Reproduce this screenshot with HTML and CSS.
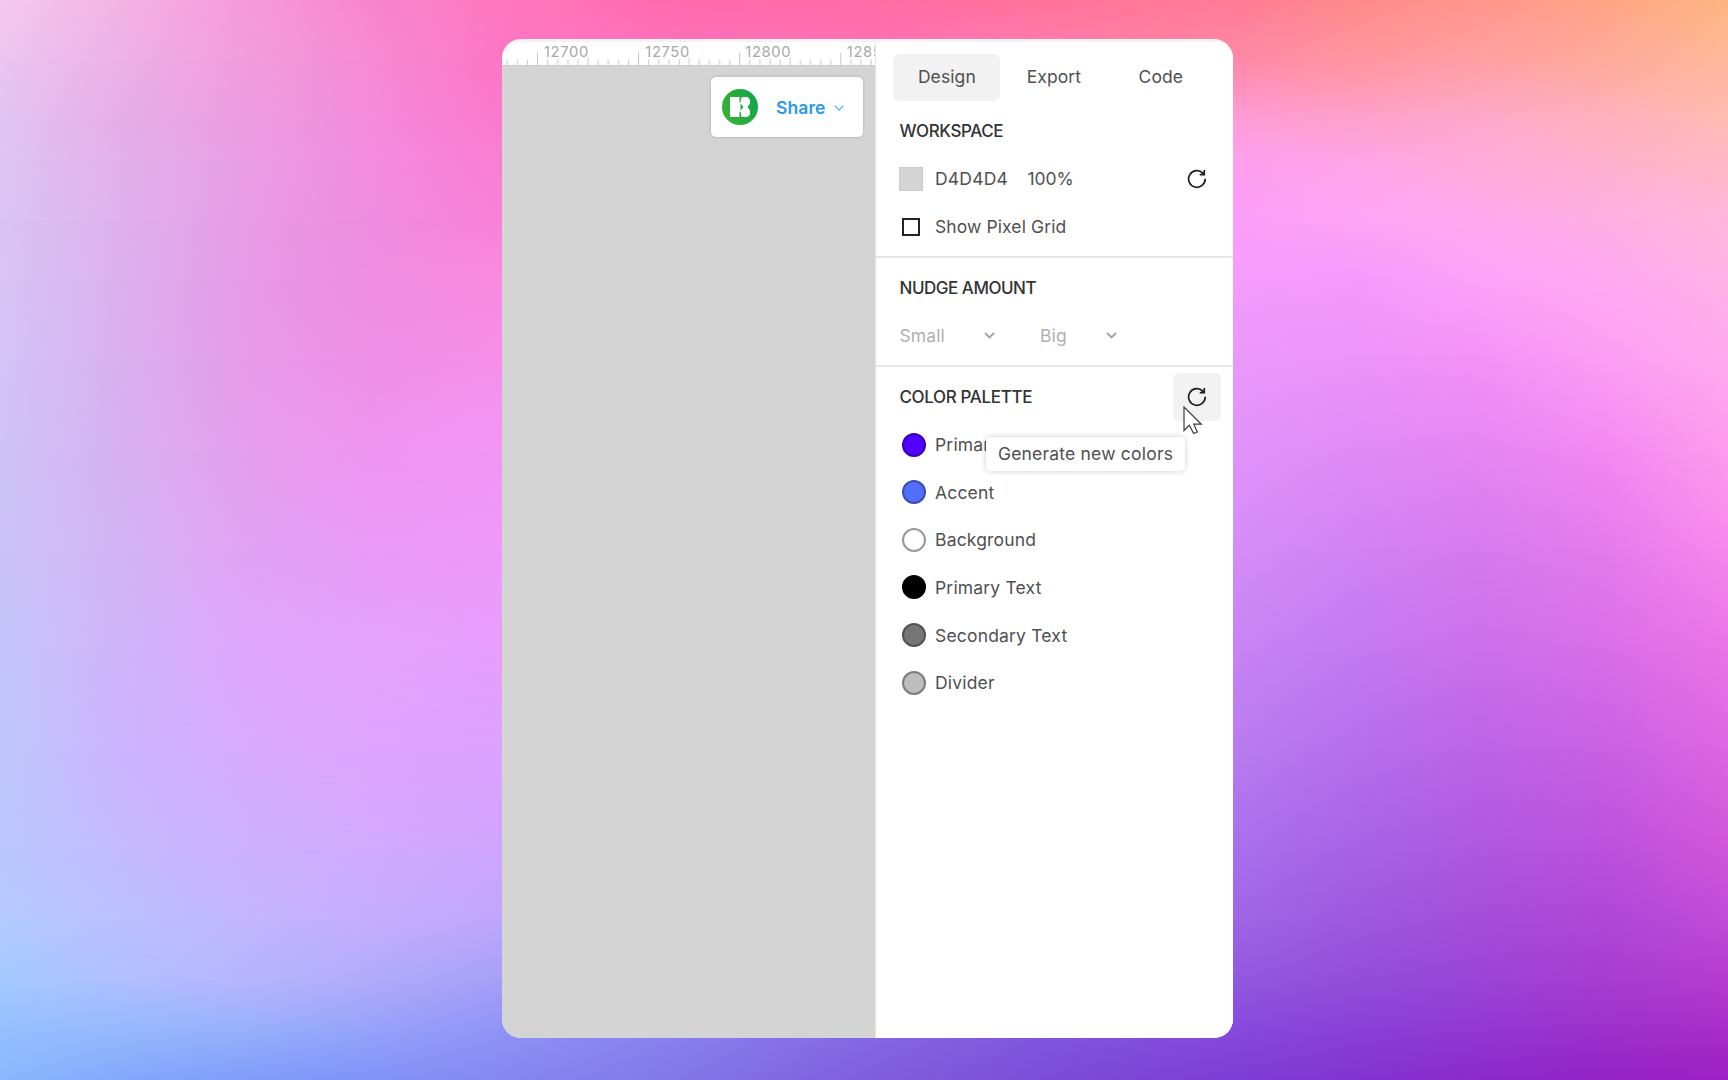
FILE: index.html
```html
<!DOCTYPE html>
<html lang="en">
<head>
<meta charset="utf-8">
<title>Workspace settings</title>
<link rel="stylesheet" href="styles.css">
</head>
<body>
<div class="stage">
  <div class="backdrop" aria-hidden="true">
    <i class="band b0"></i><i class="band b1"></i><i class="band b2"></i><i class="band b3"></i>
    <i class="band b4"></i><i class="band b5"></i><i class="band b6"></i><i class="band b7"></i>
    <i class="band b8"></i><i class="band b9"></i><i class="band b10"></i><i class="band b11"></i>
    <i class="band b12"></i><i class="band b13"></i><i class="band b14"></i><i class="band b15"></i>
  </div>
  <main class="window">
    <section class="canvas">
      <div class="ruler">
        <svg width="373" height="23" viewBox="0 0 373 23">
          <defs>
            <pattern id="ticks" x="35" y="0" width="101.1" height="23" patternUnits="userSpaceOnUse">
              <path d="M.5 10.500V23M51 15.500V23M10.600 17.500V23M20.700 17.500V23M30.900 17.500V23M41 17.500V23M61.200 17.500V23M71.300 17.500V23M81.500 17.500V23M91.600 17.500V23" stroke="#c6c6c6"/>
            </pattern>
          </defs>
          <rect width="373" height="23" fill="url(#ticks)"/>
          <g class="ruler-label">
            <text x="42" y="14.900">12700</text>
            <text x="143.300" y="14.900">12750</text>
            <text x="243.300" y="14.900">12800</text>
            <text x="344.800" y="14.900">12850</text>
          </g>
        </svg>
      </div>
      <div class="share">
        <svg class="avatar" width="36" height="36" viewBox="0 0 36 36">
          <defs><linearGradient id="green" x1="0" x2="1" y1=".7" y2=".3"><stop stop-color="#3bb034"/><stop offset="1" stop-color="#0fa848"/></linearGradient></defs>
          <circle cx="18" cy="18" r="18" fill="url(#green)"/>
          <path d="M8 8h9.500v6l1.500-2V8.500h1.500L21 8h4.500l2.500 2.500v4L25.500 18l2.500 3.500v4L25.500 28H21l-.5-.5H19V24l-1.500-2v6H8z" fill="#fff"/>
          <path d="M18.500 14.500v7l3-3.500z" fill="#22ab40"/>
        </svg>
        <span class="share-label">Share</span>
        <svg class="share-chevron" width="10" height="6" viewBox="0 0 10 6"><path d="M.7.7 5 5 9.300.7"/></svg>
      </div>
    </section>
    <aside class="panel">
      <nav class="tabs">
        <span class="tab active">Design</span><span class="tab">Export</span><span class="tab">Code</span>
      </nav>
      <section class="section workspace">
        <h2>WORKSPACE</h2>
        <div class="row">
          <span class="swatch"></span><span class="hex">D4D4D4</span><span class="pct">100%</span>
          <span class="icon-button"><svg width="20" height="20" viewBox="0 0 20 20"><path d="M18.200 9.700A8.300 8.300 0 1 1 15.800 4.100L17.100 5.400M17.300 1V5.600H12.700"/></svg></span>
        </div>
        <div class="row"><span class="checkbox"></span><span class="option">Show Pixel Grid</span></div>
      </section>
      <section class="section nudge">
        <h2>NUDGE AMOUNT</h2>
        <div class="row muted">
          <span class="field small">Small<svg width="11" height="7" viewBox="0 0 11 7"><path d="M1 1 5.500 5.500 10 1"/></svg></span>
          <span class="field big">Big<svg width="11" height="7" viewBox="0 0 11 7"><path d="M1 1 5.500 5.500 10 1"/></svg></span>
        </div>
      </section>
      <section class="section palette">
        <div class="heading-row">
          <h2>COLOR PALETTE</h2>
          <span class="icon-button hover"><svg width="20" height="20" viewBox="0 0 20 20"><path d="M18.200 9.700A8.300 8.300 0 1 1 15.800 4.100L17.100 5.400M17.300 1V5.600H12.700"/></svg>
            <svg class="cursor" width="20" height="29" viewBox="0 0 20 29"><path d="M1 1V24.500L6.300 19.300 10.700 27.500 14.300 26 10.800 18.200H18.300z"/></svg>
            <span class="tooltip">Generate new colors</span>
          </span>
        </div>
        <ul class="colors">
          <li><i class="dot primary"></i>Primary</li>
          <li><i class="dot accent"></i>Accent</li>
          <li><i class="dot background"></i>Background</li>
          <li><i class="dot text-1"></i>Primary Text</li>
          <li><i class="dot text-2"></i>Secondary Text</li>
          <li><i class="dot divider"></i>Divider</li>
        </ul>
      </section>
    </aside>
  </main>
</div>
</body>
</html>
```
FILE: styles.css
```css
* { box-sizing: border-box; }
body { margin: 0; font-family: Inter, "Liberation Sans", sans-serif; font-size: 17.5px; letter-spacing: .1px; color: #505050; }
.stage { display: grid; width: 1728px; height: 1080px; overflow: hidden; }
.backdrop, .window { grid-area: 1 / 1; }

/* Mesh gradient: each band fades in over the one before it */
.backdrop { display: grid; }
.band {
  grid-area: 1 / 1;
  background: linear-gradient(90deg, var(--c));
  -webkit-mask-image: linear-gradient(transparent var(--from), #000 var(--to));
  mask-image: linear-gradient(transparent var(--from), #000 var(--to));
}
.b0 { -webkit-mask-image: none; mask-image: none; --c: #f4c9f2 0, #f4b2e4 125px, #f89ada 250px, #f885cc 375px, #ff78c0 500px, #ff69ae 680px, #ff6ba4 860px, #ff739c 1050px, #ff7c94 1233px, #ff8a8c 1357px, #ff968c 1480px, #ffa486 1604px, #ffb682 1728px; }
.b1 { --from: 0px; --to: 60px; --c: #eac6f0 0, #edb0e6 125px, #f29cdc 250px, #f68ad2 375px, #fd76c4 500px, #ff74b8 860px, #ff88a8 1233px, #ff969f 1357px, #ffa0a4 1480px, #ffaa9a 1604px, #ffb89a 1728px; }
.b2 { --from: 60px; --to: 120px; --c: #e2c4f1 0, #e6ade6 125px, #ec9ce0 250px, #f48adb 375px, #fb79cc 500px, #ff9cd8 1233px, #ffa0cc 1357px, #ffa8cc 1480px, #ffb0be 1604px, #ffbcb4 1728px; }
.b3 { --from: 120px; --to: 160px; --c: #dfc4f2 0, #e2b0ea 125px, #ea9de4 250px, #f38be0 375px, #fa7ed2 500px, #ffa0ee 1233px, #ffa4e6 1357px, #ffaad8 1480px, #ffb2cc 1604px, #ffb8c4 1728px; }
.b4 { --from: 160px; --to: 220px; --c: #dac4f3 0, #dfb0ec 125px, #e89be6 250px, #ef8be0 375px, #f882d8 500px, #fc9efa 1233px, #fea4f6 1357px, #ffa9ee 1480px, #ffafe4 1604px, #ffb6da 1728px; }
.b5 { --from: 220px; --to: 280px; --c: #d8c4f4 0, #dcb0ee 125px, #e799e8 250px, #f08de2 375px, #f88ae0 500px, #f49cfc 1233px, #f59afb 1357px, #fda2fa 1480px, #ffa9f2 1604px, #ffb2e6 1728px; }
.b6 { --from: 280px; --to: 360px; --c: #d3c4f8 0, #daaff0 125px, #e69aea 250px, #f18fe8 375px, #f78fea 500px, #ea98fb 1233px, #ec94f9 1357px, #f591f6 1480px, #fd9df5 1604px, #ffaaee 1728px; }
.b7 { --from: 360px; --to: 450px; --c: #cec3f8 0, #d7b0f2 125px, #e69eee 250px, #ee94f0 375px, #f396f6 500px, #e093fa 1233px, #df8bf7 1357px, #e685f3 1480px, #f488f1 1604px, #ff9bee 1728px; }
.b8 { --from: 450px; --to: 550px; --c: #cac3f9 0, #d4b3f6 125px, #e2a2f4 250px, #ea9bf7 375px, #ee99f9 500px, #d68cf8 1233px, #d182f5 1357px, #d67af0 1480px, #e57aec 1604px, #f688ec 1728px; }
.b9 { --from: 550px; --to: 650px; --c: #c4c4fc 0, #d0b4fa 125px, #dea6fb 250px, #e5a2fb 375px, #e89efd 500px, #c784f4 1233px, #c479f1 1357px, #cb70ea 1480px, #da6dea 1604px, #e874e6 1728px; }
.b10 { --from: 650px; --to: 750px; --c: #bec6fc 0, #cdb4fe 125px, #d8aafc 250px, #dea4fd 375px, #dda2ff 500px, #b87cef 1233px, #b76eec 1357px, #bb64e6 1480px, #ca60e2 1604px, #dc66e4 1728px; }
.b11 { --from: 750px; --to: 850px; --c: #b9c6fd 0, #c5bbfe 125px, #ccb0fd 250px, #d2aafd 375px, #d0a5fd 500px, #a870ec 1233px, #a762e5 1357px, #ae58e0 1480px, #bc50dc 1604px, #cf56d8 1728px; }
.b12 { --from: 850px; --to: 920px; --c: #b2caff 0, #bcc0ff 125px, #c2b5fd 250px, #c5aefd 375px, #bfa6fc 500px, #9e66e6 1233px, #9e58e0 1357px, #a44dda 1480px, #b046d8 1604px, #c04cd8 1728px; }
.b13 { --from: 920px; --to: 980px; --c: #a4caff 0, #b0bfff 125px, #b6b5fc 250px, #b1aafb 375px, #a69ff8 500px, #9159e0 1233px, #934dda 1357px, #9a44d8 1480px, #a83cd2 1604px, #b43ccf 1728px; }
.b14 { --from: 980px; --to: 1030px; --c: #94c0ff 0, #96b8fd 125px, #98affc 250px, #95a2fa 375px, #9094f6 500px, #8a80ee 680px, #866ae6 860px, #8256de 1050px, #864adc 1233px, #8a40d6 1357px, #9238d2 1480px, #9e30cc 1604px, #a72eca 1728px; }
.b15 { --from: 1030px; --to: 1080px; --c: #88b8fe 0, #82a8fb 125px, #7f9cf8 250px, #8192f6 375px, #8488f0 500px, #8276e8 680px, #7f5fdf 860px, #7c4cd6 1050px, #7c3ed4 1233px, #8433d0 1357px, #8a2aca 1480px, #9422c4 1604px, #9c20c2 1728px; }

.window {
  z-index: 1; display: flex; width: 731px; height: 999px; margin: 39px 0 0 502px;
  border-radius: 19px; overflow: hidden; background: #fff; border-top: 3px solid #f3f3f3;
}
.canvas { width: 373px; background: #d4d4d4; display: flex; flex-direction: column; align-items: flex-end; }
.ruler { width: 373px; height: 23px; background: #fff; box-shadow: 0 1px 0 #cbcbcb; }
.ruler svg { display: block; }
.ruler-label { font-size: 14.700px; fill: #a8a8a8; letter-spacing: .65px; }
.share {
  display: flex; align-items: center; width: 152px; height: 60px; margin: 12px 12px 0 0; padding: 0 0 1px 11px;
  background: #fff; border-radius: 5px; box-shadow: 0 0 3px rgba(0, 0, 0, .2);
}
.share-label { margin: 1px 0 0 18px; font-weight: 600; color: #2a9aea; }
.share-chevron { margin: 3px 0 0 8px; fill: none; stroke: #6fbdf0; stroke-width: 1.500; }

.panel { flex: 1; border-left: 1px solid #e4e4e4; background: #fff; }
.tabs { display: flex; padding: 12px 0 0 17.400px; }
.tab { width: 107px; height: 47px; line-height: 46px; text-align: center; border-radius: 6px; }
.active { background: #f2f2f2; }
h2 { margin: 0; font-size: 17px; font-weight: 500; line-height: 24px; color: #333; letter-spacing: -.4px; }
.section { padding-left: 23.500px; }
.workspace { height: 157px; padding-top: 18px; border-bottom: 2px solid #e6e6e6; }
.row { display: flex; align-items: center; height: 48px; }
.workspace h2 + .row { margin-top: 12px; }
.workspace .row { margin-left: -.5px; }
.swatch { width: 24px; height: 24px; margin-right: 12px; background: #d4d4d4; border: 1px solid #cbcbcb; }
.hex, .pct, .option { padding-bottom: 2px; }
.hex { width: 92.500px; letter-spacing: .2px; }
.pct { letter-spacing: -.1px; }
.icon-button { position: relative; display: grid; place-items: center; width: 48px; height: 48px; margin: 0 12px 0 auto; border-radius: 6px; }
.icon-button > svg:first-child { fill: none; stroke: #1f1f1f; stroke-width: 1.700; }
.hover { background: #f2f2f2; }
.checkbox { width: 18px; height: 18px; margin: -1px 15px 0 3px; border: 2px solid #222; }
.nudge { height: 109px; padding-top: 18px; border-bottom: 2px solid #e6e6e6; }
.nudge .row { margin-top: 11px; }
.nudge h2 { letter-spacing: -.48px; }
.palette h2 { letter-spacing: -.35px; }
.muted { color: #b0b0b0; }
.field { display: flex; align-items: center; justify-content: space-between; }
.field svg { fill: none; stroke: #a3a3a3; stroke-width: 1.800; }
.small { width: 95.500px; margin-right: 45px; }
.big { width: 77px; }
.palette { padding-top: 6px; }
.heading-row { display: flex; align-items: center; height: 48px; }
.cursor { position: absolute; z-index: 2; left: 9.500px; top: 33px; fill: #fff; stroke: #3a3a44; stroke-width: 1.200; }
.tooltip {
  position: absolute; right: 36px; top: 64px; width: 199px; height: 34px; line-height: 33px; text-align: center;
  white-space: nowrap; background: #fff; border-radius: 5px; box-shadow: 0 0 6px rgba(0, 0, 0, .2); letter-spacing: .2px;
}
.colors { margin: -.2px 0 0; padding: 0; list-style: none; letter-spacing: .18px; }
.colors li { display: flex; align-items: center; height: 47.620px; }
.dot { width: 24px; height: 24px; margin: 0 9px 0 2.500px; border-radius: 50%; border: 2px solid; }
.primary { background: #5200ff; border-color: #3a00b8; }
.accent { background: #526eff; border-color: #3a4db4; }
.background { background: #fff; border-color: #999; }
.text-1 { background: #000; border-color: #000; }
.text-2 { background: #757575; border-color: #525252; }
.divider { background: #bdbdbd; border-color: #7c7c7c; }
```
